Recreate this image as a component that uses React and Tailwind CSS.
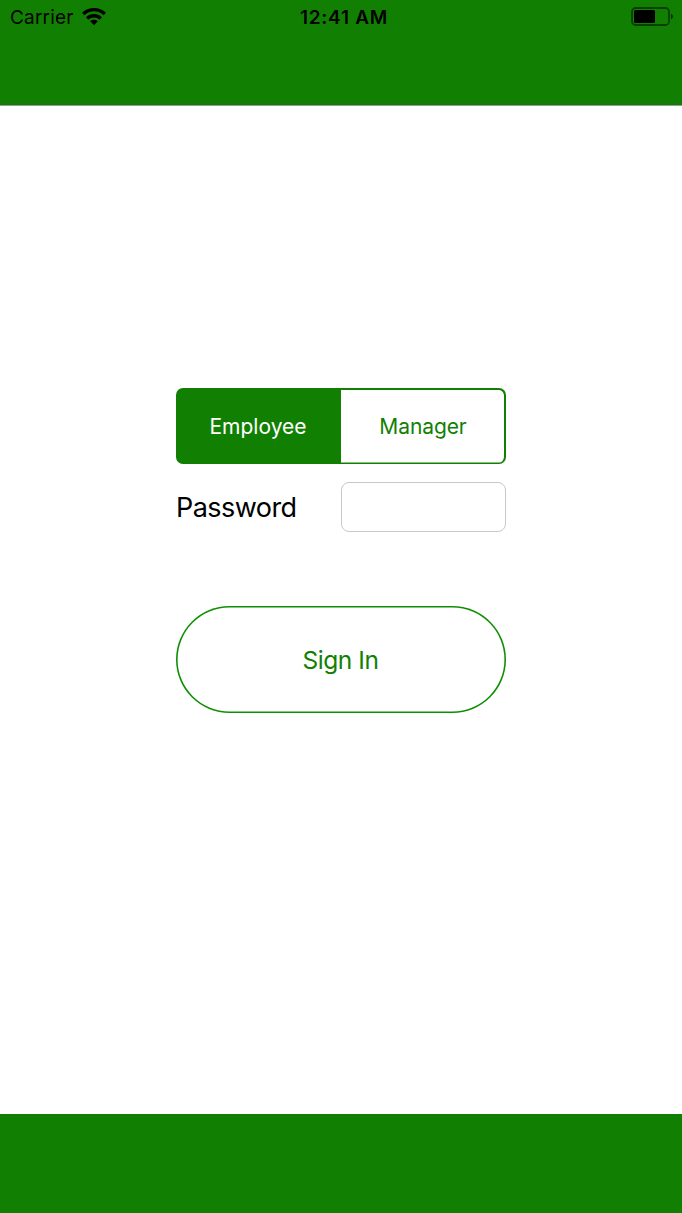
export default function App() {
  return (
    <div className="flex h-[1213px] w-[682px] flex-col bg-white font-['Inter',sans-serif] text-black">
      <header className="h-[106px] shrink-0 border-b border-[#999999] bg-[#118002]">
        <div className="grid h-[34px] grid-cols-3 items-center">
          <div className="flex items-center gap-2 pl-[10px]">
            <span className="pt-[2px] text-[19px] leading-[32px] tracking-[0.2px]">Carrier</span>
            <svg className="h-[18px] w-[24px]" viewBox="0 0 24 18" fill="none" stroke="black" strokeWidth="3.4">
              <path d="M1.2 6a15.6 15.6 0 0 1 21.6 0" />
              <path d="M5.2 10.4a9.9 9.9 0 0 1 13.6 0" />
              <path d="M12 17.3l-3.8-4a5.6 5.6 0 0 1 7.6 0z" fill="black" stroke="none" />
            </svg>
          </div>
          <div className="pt-[2px] pl-[6px] text-center text-[19px] leading-[32px] font-semibold tracking-[0.75px]">12:41 AM</div>
          <div className="flex justify-end pr-[8px]">
            <svg className="h-[20px] w-[43px]" viewBox="0 0 43 20">
              <rect x="1" y="1" width="37" height="17" rx="3.5" fill="none" stroke="black" strokeOpacity=".5" strokeWidth="1.8" />
              <rect x="3" y="3" width="21" height="13" rx="1.5" />
              <path d="M40 6.5q4 3 0 6z" fillOpacity=".6" />
            </svg>
          </div>
        </div>
      </header>
      <main className="flex grow flex-col pt-[282px] pl-[176px]">
        <div className="flex h-[76px] w-[330px] overflow-hidden rounded-[7px] border-2 border-b border-[#118002] bg-[#118002] text-[21px]">
          <button className="w-[163px] pt-px pr-[3px] text-white">Employee</button>
          <button className="grow rounded-r-[5px] border-b border-[#8abf82] bg-white pt-[2px] pl-[1px] tracking-[-0.1px] text-[#118002]">Manager</button>
        </div>
        <div className="mt-[18px] flex h-[50px] w-[330px] items-center justify-between">
          <label htmlFor="password" className="pt-[2px] text-[27px] tracking-[-0.55px]">Password</label>
          <input id="password" type="password" className="h-[50px] w-[165px] rounded-[8px] border border-[#c8c8c8] px-3 outline-none" />
        </div>
        <button className="mt-[74px] h-[107px] w-[330px] rounded-full pt-[2px] pr-px text-[24.5px] tracking-[-0.45px] text-[#118002] shadow-[inset_0_0_0_1.6px_#118f04]">Sign In</button>
      </main>
      <footer className="h-[99px] shrink-0 bg-[#118002]" />
    </div>
  );
}
